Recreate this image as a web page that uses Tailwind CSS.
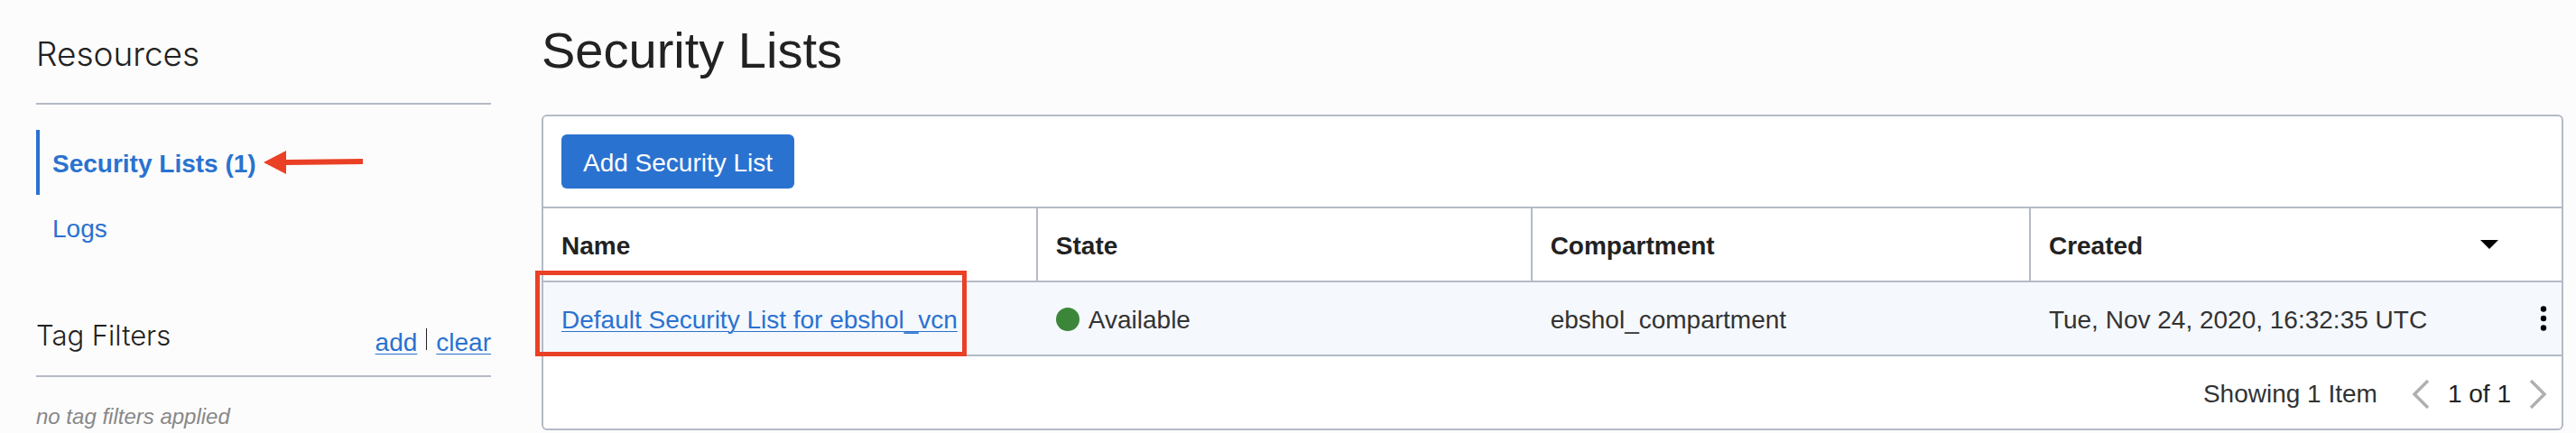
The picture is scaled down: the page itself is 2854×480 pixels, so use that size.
<!DOCTYPE html>
<html lang="en">
<head>
<meta charset="utf-8">
<title>Security Lists</title>
<meta name="viewport" content="width=device-width, initial-scale=1">
<script src="https://cdn.jsdelivr.net/npm/@tailwindcss/browser@4"></script>
</head>
<body class="min-h-screen bg-[#fcfcfc] font-['Liberation_Sans',Arial,sans-serif] text-[28px] leading-8 text-[#222]">
<div class="flex gap-14 pl-10 pr-3.5">
  <aside class="w-[504px] shrink-0">
    <h2 class="h-[116px] border-b-2 border-[#b4bac6] pt-9 font-['Inter',sans-serif] text-[37px] font-light leading-[48px]">Resources</h2>
    <nav aria-label="Resources" class="mt-7 flex flex-col">
      <div class="flex h-[72px] items-center gap-2 border-l-4 border-[#2a72d0] pl-3.5">
        <a href="#lists" aria-current="page" class="pt-1 font-bold text-[#2a72d0]">Security Lists (1)</a>
        <svg class="h-[26px] w-[110px]" viewBox="0 0 110 26" fill="#ea4026" aria-hidden="true"><path d="M0 13 25 0v10l85-1v6l-85 1v10z"/></svg>
      </div>
      <a href="#logs" class="flex h-[72px] items-center pl-[18px] pt-1 text-[#2a72d0]">Logs</a>
    </nav>
    <div class="flex h-[130px] items-end justify-between border-b-2 border-[#b4bac6] pb-5">
      <h3 class="pb-1 font-['Inter',sans-serif] text-[31px] font-light leading-10">Tag Filters</h3>
      <div class="flex items-center gap-2.5">
        <a href="#add" class="text-[#2a72d0] underline decoration-1 underline-offset-3">add</a>
        <span class="mb-2 h-6 w-px bg-[#222]"></span>
        <a href="#clear" class="text-[#2a72d0] underline decoration-1 underline-offset-3">clear</a>
      </div>
    </div>
    <p class="pt-7 text-[24px] italic text-[#888]">no tag filters applied</p>
  </aside>

  <main class="min-w-0 flex-1">
    <h1 class="pb-[39px] pt-6 text-[56px] leading-16">Security Lists</h1>
    <section class="rounded-md border-2 border-[#b4bac6] bg-white" aria-label="Security Lists">
      <div class="flex h-[100px] items-center px-5">
        <button type="button" class="h-[60px] rounded-md bg-[#2a72d0] px-6 pt-1 text-white">Add Security List</button>
      </div>
      <table class="w-full table-fixed border-separate border-spacing-0 border-y-2 border-[#b4bac6] text-left">
        <colgroup><col class="w-[24.5%]"><col class="w-[24.5%]"><col class="w-[24.7%]"><col></colgroup>
        <thead>
          <tr>
            <th scope="col" class="h-[82px] border-b-2 border-r-2 border-[#b4bac6] px-5 pb-0 pt-1">Name</th>
            <th scope="col" class="border-b-2 border-r-2 border-[#b4bac6] px-5 pb-0 pt-1">State</th>
            <th scope="col" class="border-b-2 border-r-2 border-[#b4bac6] px-5 pb-0 pt-1">Compartment</th>
            <th scope="col" class="border-b-2 border-[#b4bac6] pb-0 pl-5 pr-[70px] pt-1">
              <button type="button" class="flex w-full items-center justify-between font-bold">Created
                <svg class="mb-1 h-2.5 w-5" viewBox="0 0 20 10" fill="#000" aria-hidden="true"><path d="M0 0h20L10 10z"/></svg>
              </button>
            </th>
          </tr>
        </thead>
        <tbody>
          <tr class="bg-[#f5f8fd] text-[#333]">
            <td class="relative h-20 px-5 pb-0 pt-1">
              <a href="#default" class="whitespace-nowrap text-[#2a72d0] underline decoration-1 underline-offset-3">Default Security List for ebshol_vcn</a>
              <span class="pointer-events-none absolute -left-[9px] -top-[13px] h-[95px] w-[478px] border-5 border-[#ea4026]"></span>
            </td>
            <td class="px-5 pb-0 pt-1"><span class="flex items-center gap-2.5"><span class="mb-0.5 size-[26px] rounded-full bg-[#3b8639]"></span>Available</span></td>
            <td class="px-5 pb-0 pt-1">ebshol_compartment</td>
            <td class="pb-0 pl-5 pr-3.5 pt-1">
              <div class="flex items-center justify-between">Tue, Nov 24, 2020, 16:32:35 UTC
                <button type="button" aria-label="Actions" class="mb-1"><svg class="h-7 w-3" viewBox="0 0 12 28" fill="#000" aria-hidden="true"><circle cx="6" cy="3.5" r="3.2"/><circle cx="6" cy="14" r="3.2"/><circle cx="6" cy="24.500" r="3.2"/></svg></button>
              </div>
            </td>
          </tr>
        </tbody>
      </table>
      <div class="flex h-20 items-center justify-end pr-4 pt-1">
        <span class="mr-[38px] text-[#333]">Showing 1 Item</span>
        <button type="button" aria-label="Previous page"><svg class="h-8 w-5" viewBox="0 0 20 32" fill="none" stroke="#b0b0b0" stroke-width="3.500" aria-hidden="true"><path d="M18 1 3 16l15 15"/></svg></button>
        <span class="mx-5">1 of 1</span>
        <button type="button" aria-label="Next page"><svg class="h-8 w-5" viewBox="0 0 20 32" fill="none" stroke="#b0b0b0" stroke-width="3.500" aria-hidden="true"><path d="m2 1 15 15L2 31"/></svg></button>
      </div>
    </section>
  </main>
</div>
</body>
</html>
